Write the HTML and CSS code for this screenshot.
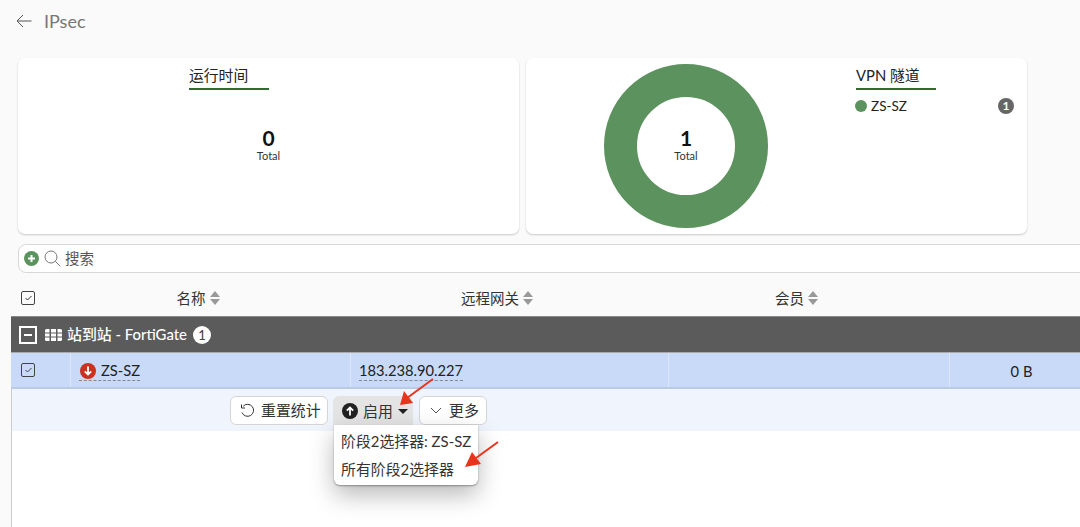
FILE: index.html
```html
<!DOCTYPE html>
<html lang="zh">
<head>
<meta charset="utf-8">
<title>IPsec</title>
<link rel="stylesheet" href="styles.css">
</head>
<body>
<div class="page">
  <header class="topbar">
    <svg class="back" width="16" height="14" viewBox="0 0 16 14"><path d="M15.500 7H1M7 1 1 7l6 6" fill="none" stroke="#555" stroke-width="1"/></svg>
    <span class="page-title">IPsec</span>
  </header>
  <section class="cards">
    <div class="card">
      <div class="card-head first">
        <div class="card-title">运行时间</div>
      </div>
      <div class="stat"><b>0</b><small>Total</small></div>
    </div>
    <div class="card">
      <div class="donut-wrap">
        <svg class="donut" width="166" height="166" viewBox="0 0 166 166"><circle cx="83" cy="83" r="65.500" fill="none" stroke="#5c925e" stroke-width="33"/></svg>
        <div class="stat over"><b>1</b><small>Total</small></div>
      </div>
      <div class="legend">
        <div class="card-title">VPN 隧道</div>
        <div class="legend-row"><i class="dot"></i><span class="legend-name">ZS-SZ</span><span class="count">1</span></div>
      </div>
    </div>
  </section>
  <div class="search">
    <span class="add">
      <svg width="15" height="15" viewBox="0 0 15 15"><circle cx="7.500" cy="7.500" r="7.500" fill="#5c925e"/><path d="M7.500 4v7M4 7.500h7" stroke="#fff" stroke-width="2"/></svg>
    </span>
    <svg class="lens" width="17" height="17" viewBox="0 0 17 17"><circle cx="7" cy="7" r="6" fill="none" stroke="#777" stroke-width="1"/><path d="m11.300 11.300 5 5" stroke="#777" stroke-width="1"/></svg>
    <span class="search-text">搜索</span>
  </div>
  <div class="table">
    <div class="thead">
      <div class="th check"><span class="box"><svg width="9" height="8" viewBox="0 0 9 8"><path d="m1.500 4 2 2 4-4" fill="none" stroke="#333"/></svg></span></div>
      <div class="th"><span>名称</span><svg class="sort" width="10" height="14" viewBox="0 0 10 14"><path d="M5 0l5 6H0zM5 14l5-6H0z" fill="#999"/></svg></div>
      <div class="th"><span>远程网关</span><svg class="sort" width="10" height="14" viewBox="0 0 10 14"><path d="M5 0l5 6H0zM5 14l5-6H0z" fill="#999"/></svg></div>
      <div class="th"><span>会员</span><svg class="sort" width="10" height="14" viewBox="0 0 10 14"><path d="M5 0l5 6H0zM5 14l5-6H0z" fill="#999"/></svg></div>
      <div class="th"></div>
    </div>
    <div class="group">
      <span class="collapse"><i></i></span>
      <svg class="grp-icon" width="17" height="12" viewBox="0 0 17 12"><g fill="#fff"><path d="M1.500 0h3v3.400H0V1.500A1.500 1.500 0 0 1 1.500 0zM6 0h5v3.400H6zM12.500 0h3A1.500 1.500 0 0 1 17 1.500v1.900h-4.500zM0 4.500h4.500v3H0zM6 4.500h5v3H6zM12.500 4.500H17v3h-4.500zM0 8.600h4.500V12h-3A1.500 1.500 0 0 1 0 10.500zM6 8.600h5V12H6zM12.500 8.600H17v1.900a1.500 1.500 0 0 1-1.500 1.500h-3z"/></g></svg>
      <span class="group-name">站到站 - FortiGate</span>
      <span class="group-count">1</span>
    </div>
    <div class="row">
      <div class="td check"><span class="box"><svg width="9" height="8" viewBox="0 0 9 8"><path d="m1.500 4 2 2 4-4" fill="none" stroke="#444"/></svg></span></div>
      <div class="td name"><span class="dashed"><svg class="status" width="16" height="16" viewBox="0 0 16 16"><circle cx="8" cy="8" r="8" fill="#c8321f"/><path d="M8 3.500v8M4.800 8.300 8 11.500l3.200-3.200" fill="none" stroke="#fff" stroke-width="1.800"/></svg><span>ZS-SZ</span></span></div>
      <div class="td"><span class="dashed ip">183.238.90.227</span></div>
      <div class="td"></div>
      <div class="td size"><span>0 B</span></div>
    </div>
    <div class="actions">
      <button class="btn reset">
        <svg class="ico" width="15" height="15" viewBox="0 0 15 15"><path d="M3.200 3.200A6 6 0 1 1 2 9.500" fill="none" stroke="#333"/><path d="M1.500 1.500v3.500h3.500" fill="none" stroke="#333"/></svg>
        <span>重置统计</span>
      </button>
      <div class="dropdown">
        <button class="btn open">
          <svg class="ico" width="16" height="16" viewBox="0 0 16 16"><circle cx="8" cy="8" r="8" fill="#222"/><path d="M8 12.500v-8M4.800 7.700 8 4.500l3.200 3.200" fill="none" stroke="#fff" stroke-width="1.800"/></svg>
          <span>启用</span>
          <svg class="ico" width="10" height="5" viewBox="0 0 10 5"><path d="M0 0h10L5 5z" fill="#222"/></svg>
        </button>
        <div class="menu">
          <div class="menu-item">阶段2选择器: ZS-SZ</div>
          <div class="menu-item">所有阶段2选择器</div>
        </div>
      </div>
      <button class="btn more">
        <svg class="ico" width="12" height="7" viewBox="0 0 12 7"><path d="m1 1 5 5 5-5" fill="none" stroke="#555"/></svg>
        <span>更多</span>
      </button>
    </div>
    <div class="blank"></div>
  </div>
  <svg class="arrows" width="1080" height="527" viewBox="0 0 1080 527">
    <g fill="#e8341c">
      <path d="M433 379 407 398" stroke="#e8341c" stroke-width="2" fill="none"/>
      <path d="M400 405 404 391 413 403z"/>
      <path d="M498 442 476 458" stroke="#e8341c" stroke-width="2" fill="none"/>
      <path d="M465 467 472 452 481 464z"/>
    </g>
  </svg>
</div>
</body>
</html>
```
FILE: styles.css
```css
* { box-sizing: border-box; }
html, body { margin: 0; height: 100%; overflow: hidden; }
body {
  background: #fafafa;
  color: #222;
  font-family: Lato, "Noto Sans CJK SC", sans-serif;
  font-size: 14.700px;
}
.page { position: relative; width: 1080px; height: 527px; overflow: hidden; display: flex; flex-direction: column; }
.topbar { height: 58px; flex: none; display: flex; align-items: flex-start; padding: 12px 0 0 16px; gap: 12px; }
.back { margin-top: 2px; }
.page-title { font-size: 18px; line-height: 18px; color: #777; }
.cards { display: flex; gap: 7px; padding-left: 18px; flex: none; }
.card {
  position: relative;
  width: 501px;
  height: 176px;
  background: #fff;
  border-radius: 7px;
  box-shadow: 0 1px 2px rgba(0,0,0,.2);
  display: flex;
  align-items: center;
  justify-content: center;
}
.card-head.first { position: absolute; left: 171px; top: 6px; }
.card-title {
  width: 80px;
  height: 26px;
  font-size: 14.800px;
  line-height: 22px;
  border-bottom: 2px solid #2f6b32;
  white-space: nowrap;
}
.legend .card-title { margin-top: -1px; }
.stat { display: flex; flex-direction: column; align-items: center; margin-top: -4px; }
.stat b { font-size: 21px; line-height: 21px; font-weight: 700; color: #111; }
.stat small { font-size: 11px; line-height: 12px; color: #333; margin-top: 2px; }
.donut-wrap { position: absolute; left: 77px; top: 5px; width: 166px; height: 166px; display: flex; align-items: center; justify-content: center; }
.donut { position: absolute; left: 0; top: 0; }
.stat.over { position: relative; }
.legend { position: absolute; left: 330px; top: 7px; width: 159px; }
.legend-row { display: flex; align-items: center; margin-top: 8px; height: 16px; }
.dot { width: 12px; height: 12px; border-radius: 50%; background: #5c925e; margin-left: -1px; }
.legend-name { margin-left: 4px; font-size: 13.500px; flex: 1; }
.count { width: 16px; height: 16px; border-radius: 50%; background: #666; color: #fff; font-size: 12px; font-weight: 700; line-height: 16px; text-align: center; margin-right: 1px; }
.search {
  margin: 10px 0 0 18px;
  width: 1100px;
  height: 29px;
  flex: none;
  background: #fff;
  border: 1px solid #d8d8d8;
  border-radius: 8px;
  display: flex;
  align-items: center;
  padding-left: 5px;
}
.add { display: flex; }
.lens { margin-left: 5px; }
.search-text { margin-left: 4px; color: #555; font-size: 14.500px; padding-bottom: 2px; }
.table { margin: 11px 0 0 11px; width: 1082px; flex: 1; display: flex; flex-direction: column; }
.thead, .row { display: grid; grid-template-columns: 59px 280px 318px 281px 144px; flex: none; }
.thead { height: 32px; }
.th { display: flex; align-items: center; justify-content: center; gap: 4px; padding: 0 24px 5px 0; color: #333; font-size: 14.500px; }
.th.check, .td.check { padding: 0 0 0 10px; justify-content: flex-start; display: flex; align-items: center; }
.th.check { padding-bottom: 4px; }
.box { width: 14px; height: 14px; border: 1px solid #444; border-radius: 2px; display: flex; align-items: center; justify-content: center; }
.group {
  height: 36px;
  flex: none;
  background: #5b5b5b;
  border-top: 1px solid #8a8a8a;
  color: #fff;
  display: flex;
  align-items: center;
  padding-left: 8px;
  font-weight: 500;
}
.collapse { width: 18px; height: 18px; border: 2px solid #fff; display: flex; align-items: center; justify-content: center; }
.collapse i { width: 8px; height: 2px; background: #fff; }
.grp-icon { margin-left: 8px; }
.group-name { margin-left: 5px; font-size: 14.900px; padding-bottom: 2px; }
.group-count { margin-left: 6px; width: 18px; height: 18px; border-radius: 50%; background: #fff; color: #444; font-size: 13px; line-height: 18px; text-align: center; }
.row { height: 37px; background: #c9daf8; border-top: 1px solid #aaa; border-bottom: 2px solid #bccbe3; }
.td { display: flex; align-items: center; border-left: 1px solid #dde6f6; padding: 2px 0 0 8px; }
.td.check { border-left: 0; padding-top: 0; }
.dashed { display: inline-flex; align-items: center; gap: 5px; border-bottom: 1px dashed #888; height: 19px; line-height: 19px; white-space: nowrap; }
.status { margin-left: 1px; flex: none; }
.size { justify-content: center; padding-left: 0; }
.actions {
  height: 42px;
  flex: none;
  background: #f0f4fd;
  border-left: 1px solid #ccc;
  display: flex;
  align-items: flex-start;
  padding: 7px 0 0 218px;
  font-size: 14.900px;
}
.btn {
  height: 29px;
  padding: 0 8px 0 9px;
  font: inherit;
  color: #333;
  background: #fff;
  border: 1px solid #d5d5d5;
  border-radius: 6px;
  display: flex;
  align-items: center;
  gap: 6px;
  white-space: nowrap;
}
.btn span { padding-bottom: 2px; }
.ico { flex: none; }
.reset { width: 98px; }
.more { width: 68px; margin-left: 6px; padding-left: 10px; gap: 7px; }
.dropdown { position: relative; z-index: 2; margin-left: 5px; }
.btn.open { background: #e4e4e4; border-color: #e4e4e4; border-radius: 6px 6px 0 0; height: 30px; padding: 0 0 0 8px; width: 80px; gap: 5px; }
.menu {
  position: absolute;
  left: 1px;
  top: 29px;
  width: 144px;
  height: 60px;
  background: #fff;
  border-radius: 0 0 6px 6px;
  box-shadow: 0 1px 2px rgba(0,0,0,.35), 0 10px 24px rgba(0,0,0,.28);
  padding-top: 2px;
  white-space: nowrap;
  color: #333;
}
.menu-item { height: 28px; line-height: 28px; padding-left: 7px; }
.blank { flex: 1; background: #fff; border-left: 1px solid #ccc; }
.arrows { position: absolute; left: 0; top: 0; pointer-events: none; z-index: 3; }
```
